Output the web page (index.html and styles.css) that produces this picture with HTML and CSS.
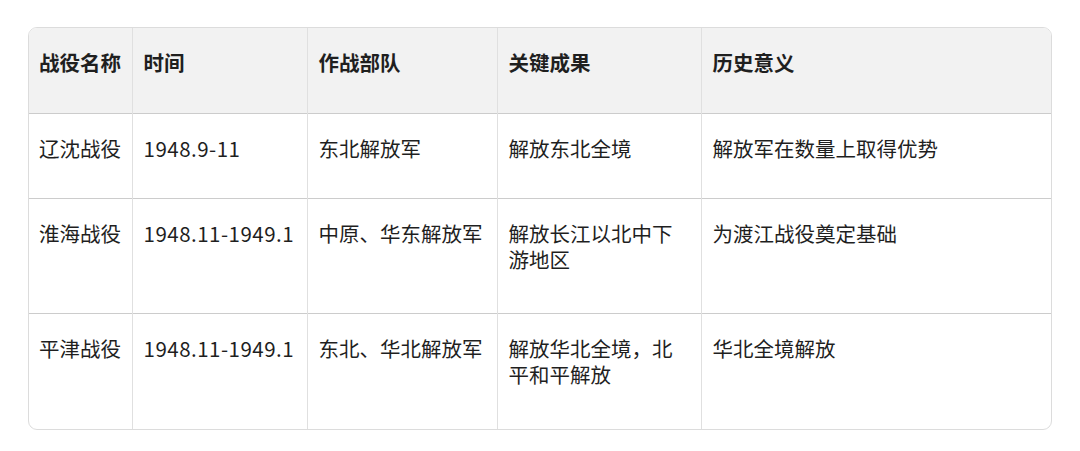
FILE: index.html
```html
<!DOCTYPE html>
<html lang="zh">
<head>
<meta charset="utf-8">
<link rel="stylesheet" href="styles.css">
</head>
<body>
<div class="card">
<table class="grid">
<colgroup>
<col class="c1"><col class="c2"><col class="c3"><col class="c4"><col class="c5">
</colgroup>
<thead>
<tr class="head"><th>战役名称</th><th>时间</th><th>作战部队</th><th>关键成果</th><th>历史意义</th></tr>
</thead>
<tbody>
<tr class="r1"><td>辽沈战役</td><td class="num">1948.9-11</td><td>东北解放军</td><td>解放东北全境</td><td>解放军在数量上取得优势</td></tr>
<tr class="r2"><td>淮海战役</td><td class="num">1948.11-1949.1</td><td>中原、华东解放军</td><td>解放长江以北中下游地区</td><td>为渡江战役奠定基础</td></tr>
<tr class="r3"><td>平津战役</td><td class="num">1948.11-1949.1</td><td>东北、华北解放军</td><td>解放华北全境，北平和平解放</td><td>华北全境解放</td></tr>
</tbody>
</table>
</div>
</body>
</html>
```
FILE: styles.css
```css
html, body {
  margin: 0;
  padding: 0;
  background: #ffffff;
}
body {
  padding: 27px 28px 0 28px;
  font-family: "Noto Sans CJK SC", "Noto Sans", sans-serif;
  color: #1f1f1f;
}
.card {
  width: 1022px;
  border: 1px solid #dcdcdc;
  border-radius: 9px;
  overflow: hidden;
}
.grid {
  width: 100%;
  border-collapse: collapse;
  table-layout: fixed;
}
.c1 { width: 103px; }
.c2 { width: 175px; }
.c3 { width: 190px; }
.c4 { width: 204px; }
.c5 { width: auto; }
.grid th, .grid td {
  text-align: left;
  vertical-align: top;
  font-size: 20.5px;
  line-height: 26px;
  padding: 21px 11px 0 11px;
  border-left: 1px solid #e0e0e0;
  border-top: 1px solid #cccccc;
  word-break: break-all;
}
.grid th:first-child, .grid td:first-child {
  border-left: none;
  padding-left: 10px;
  padding-right: 4px;
  white-space: nowrap;
}
.grid td.num {
  letter-spacing: 0.5px;
  white-space: nowrap;
}
.head th {
  border-top: none;
  background: #f2f2f2;
  font-weight: 700;
}
.head { height: 85px; }
.r1 { height: 85px; }
.r2 { height: 115px; }
.r3 { height: 116px; }
```
